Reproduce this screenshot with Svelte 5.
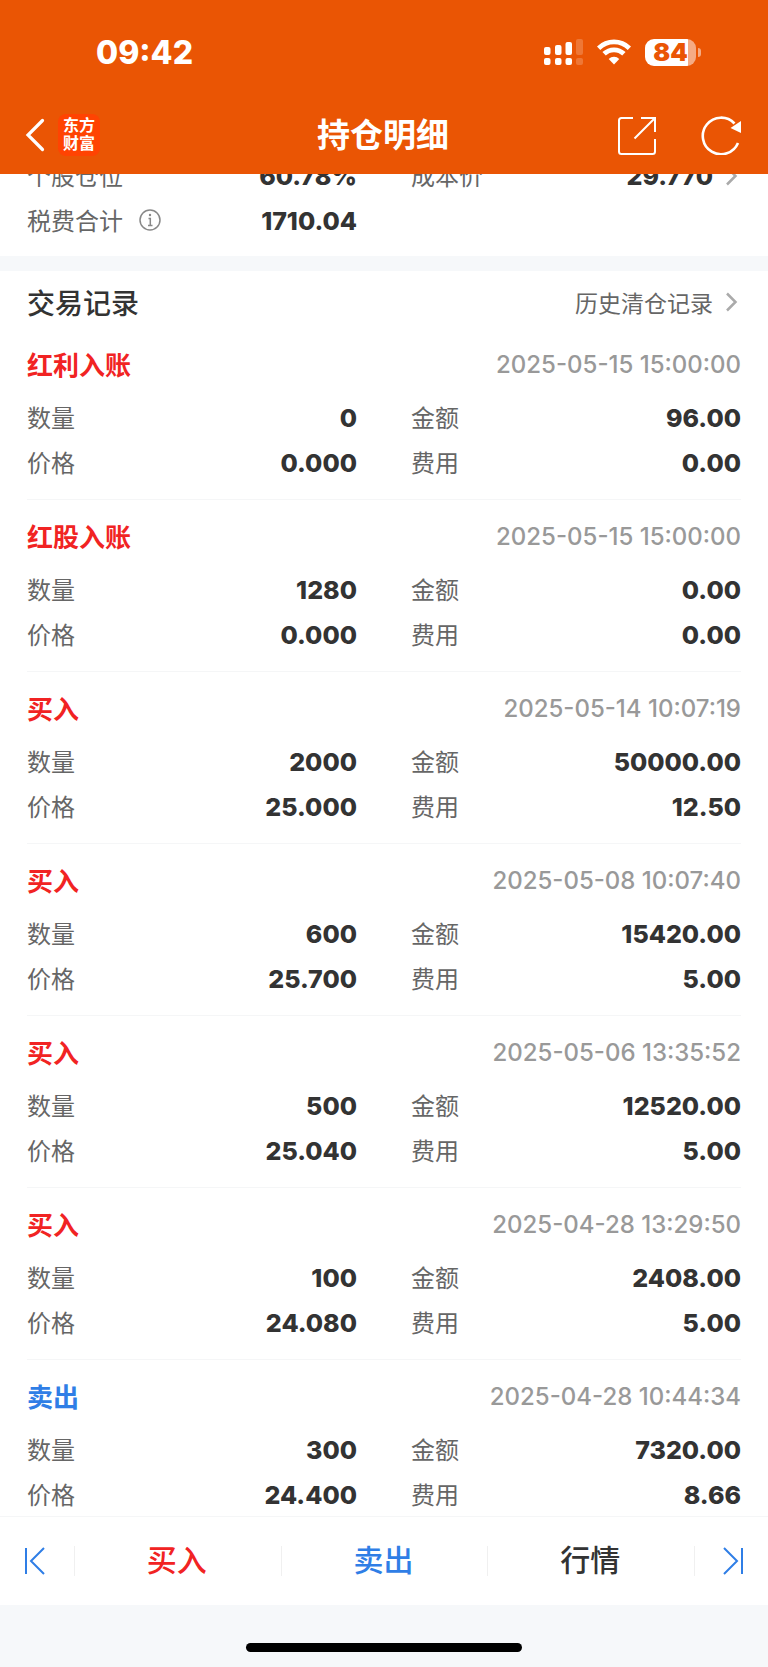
<script lang="ts">
/**
 * Position detail screen: fee summary, trade records and the trade toolbar.
 */

interface TradeRecord {
  type: string;
  side: 'in' | 'out';
  time: string;
  quantity: string;
  amount: string;
  price: string;
  fee: string;
}

const records: TradeRecord[] = [
  { type: '红利入账', side: 'in', time: '2025-05-15 15:00:00', quantity: '0', amount: '96.00', price: '0.000', fee: '0.00' },
  { type: '红股入账', side: 'in', time: '2025-05-15 15:00:00', quantity: '1280', amount: '0.00', price: '0.000', fee: '0.00' },
  { type: '买入', side: 'in', time: '2025-05-14 10:07:19', quantity: '2000', amount: '50000.00', price: '25.000', fee: '12.50' },
  { type: '买入', side: 'in', time: '2025-05-08 10:07:40', quantity: '600', amount: '15420.00', price: '25.700', fee: '5.00' },
  { type: '买入', side: 'in', time: '2025-05-06 13:35:52', quantity: '500', amount: '12520.00', price: '25.040', fee: '5.00' },
  { type: '买入', side: 'in', time: '2025-04-28 13:29:50', quantity: '100', amount: '2408.00', price: '24.080', fee: '5.00' },
  { type: '卖出', side: 'out', time: '2025-04-28 10:44:34', quantity: '300', amount: '7320.00', price: '24.400', fee: '8.66' }
];

function fields(record: TradeRecord) {
  return [
    ['数量', record.quantity],
    ['金额', record.amount],
    ['价格', record.price],
    ['费用', record.fee]
  ];
}
</script>

{#snippet chevron()}
  <svg class="chevron" width="13" height="20" viewBox="0 0 13 20" aria-hidden="true">
    <path d="M2 1.5 10.5 10 2 18.5" />
  </svg>
{/snippet}

<div class="app">
  <header>
    <div class="status-bar">
      <span class="clock">09:42</span>
      <div class="indicators">
        <svg width="39" height="28" viewBox="0 0 39 28" fill="#fff" aria-hidden="true">
          <rect x="0" y="9" width="6.5" height="8" rx="2" />
          <rect x="11" y="7" width="6.5" height="10" rx="2" />
          <rect x="21.5" y="4" width="6.5" height="13" rx="2" />
          <rect x="0" y="20" width="6.5" height="7" rx="2" />
          <rect x="11" y="20" width="6.5" height="7" rx="2" />
          <rect x="21.5" y="20" width="6.5" height="7" rx="2" />
          <g opacity="0.2">
            <rect x="32" y="1" width="7" height="16" rx="2" />
            <rect x="32" y="20" width="7" height="7" rx="2" />
          </g>
        </svg>
        <svg width="34" height="28" viewBox="0 0 34 28" fill="none" stroke="#fff" stroke-width="4.8" aria-hidden="true">
          <path d="M1.6 10.2a22 22 0 0 1 30.8 0" />
          <path d="M7.1 15.8a14.2 14.2 0 0 1 19.8 0" />
          <path d="M17 26.4 11.7 21a7.6 7.6 0 0 1 10.6 0z" fill="#fff" stroke="none" />
        </svg>
        <div class="battery">
          <span class="battery-level">84</span>
          <span class="battery-tip"></span>
        </div>
      </div>
    </div>

    <div class="nav-bar">
      <div class="nav-side">
        <button class="icon-button" aria-label="返回">
          <svg width="20" height="34" viewBox="0 0 20 34" fill="none" stroke="#fff" stroke-width="3.2" aria-hidden="true">
            <path d="M17.5 2.5 3 17l14.5 14.5" stroke-linecap="round" />
          </svg>
        </button>
        <a class="logo" href="#home">
          <span>东方</span>
          <span>财富</span>
        </a>
      </div>
      <h1>持仓明细</h1>
      <div class="nav-side nav-actions">
        <button class="icon-button" aria-label="分享">
          <svg width="38" height="40" viewBox="1 0 38 40" fill="none" stroke="#fff" stroke-width="2" aria-hidden="true">
            <path d="M16 3H4.5Q2 3 2 5.5V36.5Q2 39 4.500 39H35.5Q38 39 38 36.5V24" />
            <path d="M24 3H38V17M37.5 3.5 17.5 23.5" />
          </svg>
        </button>
        <button class="icon-button" aria-label="刷新">
          <svg width="40" height="40" viewBox="0 0 40 40" fill="none" stroke="#fff" stroke-width="2.6" aria-hidden="true">
            <path d="M37 28A18.3 18.3 0 1 1 33.5 8.500" />
            <path d="M40 6V18L29.5 13Z" fill="#fff" stroke="none" />
          </svg>
        </button>
      </div>
    </div>
  </header>

  <main>
    <dl class="summary fields">
      <div class="field">
        <dt>个股仓位</dt>
        <dd>60.78%</dd>
      </div>
      <div class="field">
        <dt>成本价</dt>
        <dd class="with-chevron">29.770 {@render chevron()}</dd>
      </div>
      <div class="field">
        <dt>
          税费合计
          <svg width="22" height="22" viewBox="0 0 22 22" fill="none" stroke="#888" stroke-width="1.5" aria-hidden="true">
            <circle cx="11" cy="11" r="10" />
            <path d="M9.5 9.5h1.8V16.5M9 16.5h4.500" />
            <circle cx="11" cy="6" r="1.2" fill="#888" stroke="none" />
          </svg>
        </dt>
        <dd>1710.04</dd>
      </div>
    </dl>

    <section class="records">
      <div class="section-header">
        <h2>交易记录</h2>
        <a class="history" href="#history">历史清仓记录 {@render chevron()}</a>
      </div>

      {#each records as record}
        <article>
          <div class="record-header">
            <h3 class={record.side}>{record.type}</h3>
            <time>{record.time}</time>
          </div>
          <dl class="fields">
            {#each fields(record) as [label, value]}
              <div class="field">
                <dt>{label}</dt>
                <dd>{value}</dd>
              </div>
            {/each}
          </dl>
        </article>
      {/each}
    </section>
  </main>

  <footer>
    <nav class="toolbar">
      <button class="step" aria-label="上一个">
        <svg width="22" height="28" viewBox="0 0 22 28" aria-hidden="true">
          <path d="M2 1v26M20 1 7 14l13 13" />
        </svg>
      </button>
      <button class="action in">买入</button>
      <button class="action out">卖出</button>
      <button class="action">行情</button>
      <button class="step" aria-label="下一个">
        <svg width="22" height="28" viewBox="0 0 22 28" aria-hidden="true">
          <path d="M20 1v26M2 1l13 13L2 27" />
        </svg>
      </button>
    </nav>
    <div class="home-area">
      <div class="home-indicator"></div>
    </div>
  </footer>
</div>

<style>
:global(body) {
  margin: 0;
  background: #fff;
}

.app {
  display: flex;
  flex-direction: column;
  height: 100vh;
  overflow: hidden;
  font-family: Inter, "Noto Sans CJK SC", sans-serif;
  color: #333;
}

h1,
h2,
h3,
dl,
dd {
  margin: 0;
}

button {
  padding: 0;
  border: none;
  background: none;
  font-family: inherit;
  color: inherit;
  cursor: pointer;
}

a {
  text-decoration: none;
}

svg {
  display: block;
  flex: none;
}

header {
  position: relative;
  z-index: 1;
  flex: none;
  background: #ea5504;
  color: #fff;
}

.status-bar {
  display: flex;
  align-items: center;
  justify-content: space-between;
  height: 104px;
  padding: 0 67px 0 96px;
}

.clock {
  font-size: 32px;
  font-weight: 800;
}

.indicators {
  display: flex;
  align-items: center;
  gap: 14px;
}

.battery {
  display: flex;
  align-items: center;
  gap: 2px;
}

.battery-level {
  width: 51px;
  border-radius: 9px;
  background: linear-gradient(90deg, #fff 84%, #f5ab84 84%);
  color: #ea5504;
  font-size: 25px;
  font-weight: 900;
  line-height: 27px;
  text-align: center;
}

.battery-tip {
  width: 3px;
  height: 9px;
  border-radius: 0 4px 4px 0;
  background: #f5ab84;
}

.nav-bar {
  display: grid;
  grid-template-columns: 1fr auto 1fr;
  align-items: center;
  height: 62px;
  padding: 0 27px 8px 25px;
}

.nav-side {
  display: flex;
  align-items: center;
  gap: 13px;
}

.nav-actions {
  justify-content: flex-end;
  gap: 45px;
}

.logo {
  display: flex;
  flex-direction: column;
  width: 42px;
  padding: 2px 0 4px;
  border-radius: 8px;
  background: #ff4302;
  color: #fff;
  font-size: 16px;
  font-weight: 700;
  line-height: 18px;
  text-align: center;
}

h1 {
  font-size: 33px;
  font-weight: 700;
  line-height: 48px;
}

main {
  flex: 1;
  min-height: 0;
  overflow-y: auto;
  scrollbar-width: none;
}

.fields {
  display: grid;
  grid-template-columns: 1fr 1fr;
  column-gap: 54px;
}

.field {
  display: flex;
  align-items: center;
  justify-content: space-between;
  height: 45px;
}

dt {
  display: flex;
  align-items: center;
  gap: 16px;
  padding-bottom: 2px;
  font-size: 24px;
  color: #666;
}

dd {
  font-size: 25px;
  font-weight: 800;
}

.with-chevron {
  display: flex;
  align-items: center;
  gap: 12px;
  padding-right: 3px;
}

.chevron {
  fill: none;
  stroke: #aaa;
  stroke-width: 2.5;
}

/* first line sits scrolled under the header */
.summary {
  margin-top: -21px;
  padding: 0 27px 13px;
  border-bottom: 15px solid #f6f8fa;
}

.records {
  padding: 0 27px;
}

.section-header {
  display: flex;
  align-items: center;
  justify-content: space-between;
  height: 53px;
  padding: 4px 0 0;
}

h2 {
  font-size: 28px;
  font-weight: 500;
}

.history {
  display: flex;
  align-items: center;
  gap: 12px;
  padding-right: 3px;
  font-size: 23px;
  color: #666;
}

article {
  padding: 16px 0 14px;
  border-bottom: 1px solid #f5f6f7;
}

.record-header {
  display: flex;
  align-items: center;
  justify-content: space-between;
  height: 40px;
  margin-bottom: 11px;
}

h3 {
  padding-bottom: 2px;
  font-size: 26px;
  font-weight: 700;
}

time {
  font-size: 24px;
  font-weight: 500;
  color: #999;
}

.in {
  color: #f12323;
}

.out {
  color: #2f7ee6;
}

footer {
  flex: none;
  background: #f6f8fa;
}

.toolbar {
  display: flex;
  align-items: center;
  height: 89px;
  padding-bottom: 1px;
  box-sizing: border-box;
  border-top: 1px solid #f5f6f7;
  background: #fff;
}

.toolbar button {
  height: 30px;
}

.toolbar button + button {
  border-left: 1px solid #f0f0f0;
}

.step {
  display: flex;
  align-items: center;
  justify-content: center;
  width: 74px;
}

.step:first-child {
  padding-right: 4px;
}

.step:last-child {
  padding-left: 2px;
}

.step svg {
  fill: none;
  stroke: #2f7ee6;
  stroke-width: 2;
}

.toolbar .action {
  flex: 1;
  padding: 0 2px 2px 0;
  font-size: 30px;
  font-weight: 500;
  line-height: 28px;
}

.home-area {
  padding: 38px 0 15px;
}

.home-indicator {
  width: 36%;
  height: 9px;
  margin: 0 auto;
  border-radius: 5px;
  background: #000;
}
</style>
